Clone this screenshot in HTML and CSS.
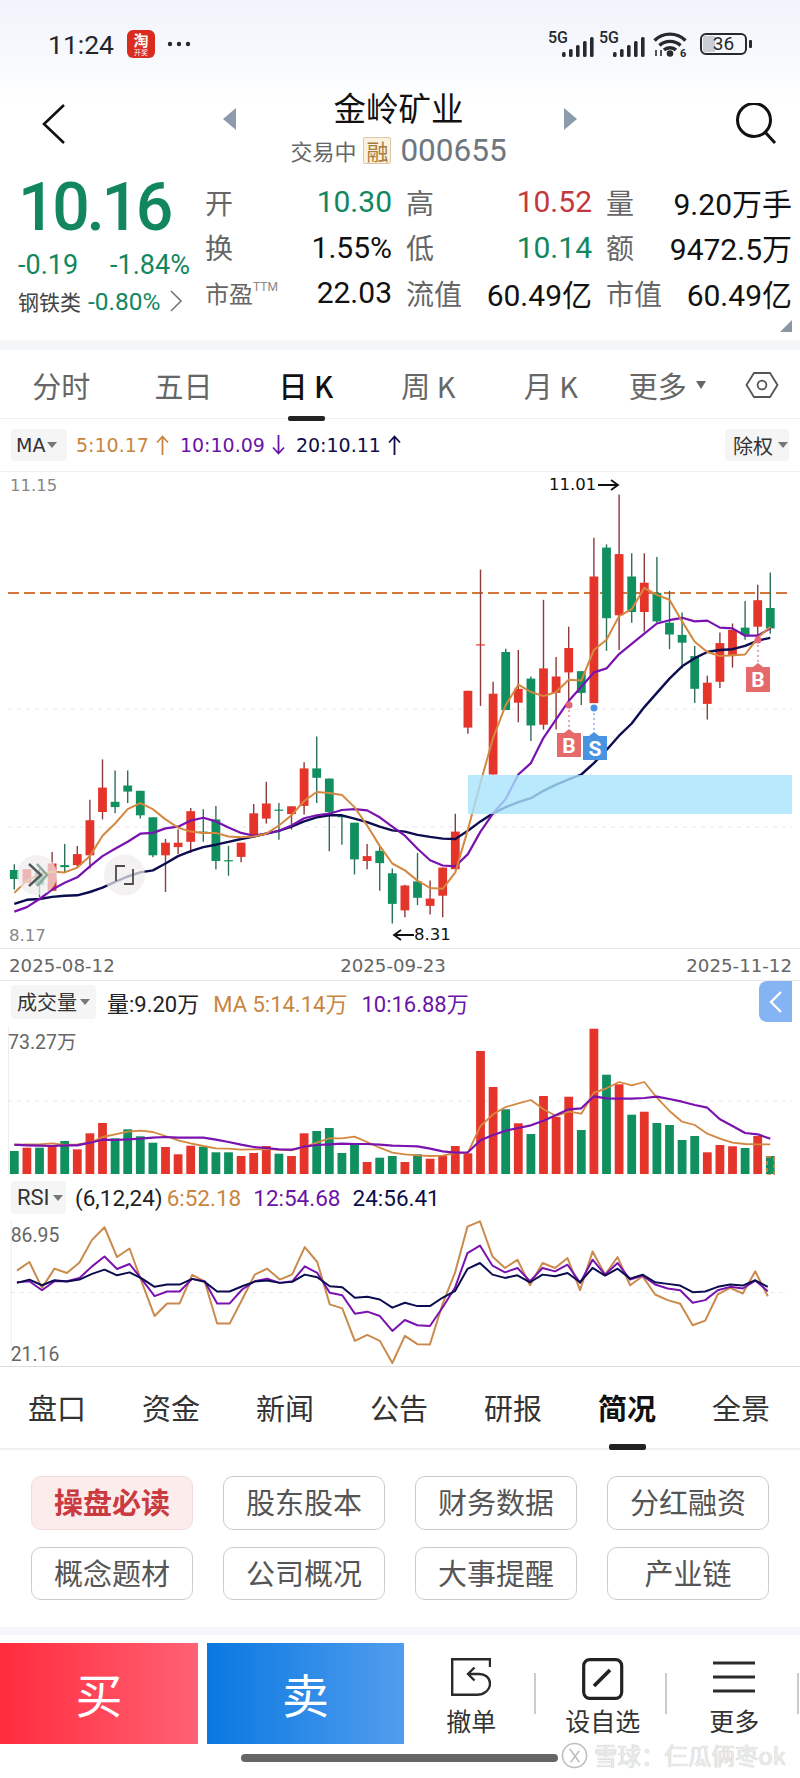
FILE: index.html
```html
<!DOCTYPE html>
<html lang="zh-CN">
<head>
    <meta charset="UTF-8">
    <meta name="viewport" content="width=device-width, initial-scale=1.0">
    <title>金岭矿业 000655</title>
    <link rel="stylesheet" href="styles.css">
</head>
<body>
    <div class="page">
        <div class="status">
            <span class="clock">11:24</span>
            <div class="app-icon"><span class="app-top">淘</span><span class="app-bottom">开奖</span></div>
            <svg class="dots" width="24" height="6" viewBox="0 0 24 6"><circle cx="3" cy="3" r="2.2"/><circle cx="12" cy="3" r="2.2"/><circle cx="21" cy="3" r="2.2"/></svg>
            <div class="status-right">
                <div class="signal">
                    <span class="signal-tag">5G</span>
                    <svg width="32" height="22" viewBox="0 0 32 22"><rect x="0" y="16" width="3.6" height="5" rx="1.5"/><rect x="7" y="13" width="3.6" height="8" rx="1.5"/><rect x="14" y="9" width="3.6" height="12" rx="1.5"/><rect x="21" y="5" width="3.6" height="16" rx="1.5"/><rect x="28" y="1" width="3.6" height="20" rx="1.5"/></svg>
                </div>
                <div class="signal">
                    <span class="signal-tag">5G</span>
                    <svg width="32" height="22" viewBox="0 0 32 22"><rect x="0" y="16" width="3.6" height="5" rx="1.5"/><rect x="7" y="13" width="3.6" height="8" rx="1.5"/><rect x="14" y="9" width="3.6" height="12" rx="1.5"/><rect x="21" y="5" width="3.6" height="16" rx="1.5"/><rect x="28" y="1" width="3.6" height="20" rx="1.5"/></svg>
                </div>
                <svg class="wifi" width="34" height="27" viewBox="0 0 34 27" fill="none" stroke="#26292d" stroke-width="3.4">
                    <path d="M1.5 9.5C10 1 24 1 32.5 9.5"/>
                    <path d="M6.5 14.5C12 9 22 9 27.5 14.5"/>
                    <path d="M11 19C14 16 20 16 23 19"/>
                    <circle cx="17" cy="22.5" r="1.6" fill="#26292d"/>
                    <path d="M3 19v6M8 19v6" stroke-width="1.6"/>
                    <text x="27" y="26" class="wifi-num">6</text>
                </svg>
                <div class="battery"><span class="battery-fill"></span><span class="battery-num">36</span></div>
                <span class="battery-tip"></span>
            </div>
        </div>

        <div class="title">
            <svg class="back" width="24" height="40" viewBox="0 0 24 40" fill="none" stroke="#111" stroke-width="2.6"><path d="M22 1L2 20L22 39"/></svg>
            <span class="arrow-left"></span>
            <div class="title-mid">
                <div class="title-name">金岭矿业</div>
                <div class="title-sub"><span>交易中</span><span class="rong">融</span><span class="code">000655</span></div>
            </div>
            <span class="arrow-right"></span>
            <svg class="search" width="44" height="42" viewBox="0 0 44 42" fill="none" stroke="#111" stroke-width="3"><circle cx="20" cy="17" r="16.5"/><path d="M31 29L41 40"/></svg>
        </div>

        <div class="quote">
            <div class="price-box">
                <div class="price">10.16</div>
                <div class="change"><span>-0.19</span><span>-1.84%</span></div>
                <div class="sector"><span class="sector-name">钢铁类</span><span class="sector-value">-0.80%</span>
                    <svg width="13" height="22" viewBox="0 0 13 22" fill="none" stroke="#777" stroke-width="1.6"><path d="M1 1L11 11L1 21"/></svg>
                </div>
            </div>
            <div class="quote-grid">
                <div class="cell"><span class="cell-label">开</span><span class="cell-value green">10.30</span></div>
                <div class="cell"><span class="cell-label">高</span><span class="cell-value red">10.52</span></div>
                <div class="cell"><span class="cell-label">量</span><span class="cell-value">9.20万手</span></div>
                <div class="cell"><span class="cell-label">换</span><span class="cell-value">1.55%</span></div>
                <div class="cell"><span class="cell-label">低</span><span class="cell-value green">10.14</span></div>
                <div class="cell"><span class="cell-label">额</span><span class="cell-value">9472.5万</span></div>
                <div class="cell"><span class="cell-label small">市盈<sup>TTM</sup></span><span class="cell-value">22.03</span></div>
                <div class="cell"><span class="cell-label">流值</span><span class="cell-value">60.49亿</span></div>
                <div class="cell"><span class="cell-label">市值</span><span class="cell-value">60.49亿</span></div>
            </div>
            <span class="corner"></span>
        </div>

        <div class="period-tabs">
            <span class="period">分时</span>
            <span class="period">五日</span>
            <span class="period active">日 K</span>
            <span class="period">周 K</span>
            <span class="period">月 K</span>
            <span class="period more">更多<i class="caret big"></i></span>
            <svg class="hex" width="34" height="28" viewBox="0 0 34 28" fill="none" stroke="#555" stroke-width="1.8"><path d="M9 2H25L32.5 14L25 26H9L1.5 14Z"/><circle cx="17" cy="14" r="4.4"/></svg>
        </div>

        <div class="ma-row">
            <span class="pill pill-ma">MA<i class="caret"></i></span>
            <span class="ma-text orange">5:10.17<svg class="ma-arrow" width="13" height="20" viewBox="0 0 13 20"><path d="M6.5 20V2M1 7.5L6.5 1.5L12 7.5"/></svg></span>
            <span class="ma-text purple">10:10.09<svg class="ma-arrow" width="13" height="20" viewBox="0 0 13 20"><path d="M6.5 0V18M1 12.5L6.5 18.5L12 12.5"/></svg></span>
            <span class="ma-text navy">20:10.11<svg class="ma-arrow" width="13" height="20" viewBox="0 0 13 20"><path d="M6.5 20V2M1 7.5L6.5 1.5L12 7.5"/></svg></span>
            <span class="pill pill-right">除权<i class="caret"></i></span>
        </div>

        <svg class="chart-main" id="chart-main" width="800" height="476" viewBox="0 0 800 476">
            <text class="axis-text" x="10" y="19">11.15</text>
            <text class="axis-text" x="9" y="469">8.17</text>
            <text class="note-text" x="549" y="18">11.01</text>
            <path d="M598 13H617M611 8L618 13L611 18" class="note-arrow"/>
            <path d="M414 463H394M401 458L394 463L401 468" class="note-arrow"/>
            <text class="note-text" x="414" y="468">8.31</text>
            <path d="M8 237H792M8 355H792" class="grid-line"/>
            <path d="M8 121H792" class="cost-line"/>
            <g id="main-candles"></g>
            <g id="main-lines"></g>
            <rect class="zone" x="468" y="303" width="324" height="39"/>
            <g class="mark">
                <path class="mark-stem red-mark" d="M569 233V258"/><circle cx="569" cy="233" r="3.5" fill="#e4637a"/>
                <path d="M557 261H564L569 257L574 261H581V285H557Z" fill="#e46a6c"/>
                <text class="mark-text" x="569" y="281">B</text>
                <path class="mark-stem blue-mark" d="M594 236V260"/><circle cx="594" cy="236" r="3.5" fill="#4a93e3"/>
                <path d="M583 264H589L594 260L599 264H607V288H583Z" fill="#4a93e3"/>
                <text class="mark-text" x="595" y="284">S</text>
                <path class="mark-stem red-mark" d="M758 168V190"/><circle cx="758" cy="168" r="3.5" fill="#e4637a"/>
                <path d="M746 195H753L758 191L763 195H770V220H746Z" fill="#e46a6c"/>
                <text class="mark-text" x="758" y="215">B</text>
            </g>
            <g class="float-btn">
                <circle cx="37" cy="403" r="20"/>
                <circle cx="124.5" cy="403" r="20.5"/>
                <path class="float-arrow dark" d="M29 392L41 403L29 414"/>
                <path class="float-arrow teal" d="M37 392L47 403L37 414"/>
                <path class="float-bracket" d="M116 409V394H125M133 397V412H124"/>
            </g>
        </svg>

        <div class="date-row"><span>2025-08-12</span><span class="date-mid">2025-09-23</span><span>2025-11-12</span></div>

        <div class="sub-head vol-head">
            <span class="pill pill-wide">成交量<i class="caret"></i></span>
            <span class="sub-text">量:9.20万</span>
            <span class="sub-text orange">MA 5:14.14万</span>
            <span class="sub-text purple">10:16.88万</span>
            <span class="side-btn"><svg width="14" height="24" viewBox="0 0 14 24" fill="none" stroke="#fff" stroke-width="2.4"><path d="M12 2L2 12L12 22"/></svg></span>
        </div>
        <svg class="chart-vol" id="chart-vol" width="800" height="149" viewBox="0 0 800 149">
            <path class="axis-line" d="M8.5 0V149"/>
            <path d="M8 75H792" class="grid-line"/>
            <text class="sub-axis" x="8" y="23">73.27万</text>
            <g id="vol-bars"></g>
            <g id="vol-lines"></g>
            <rect class="vol-now" x="767" y="131" width="7" height="18"/>
        </svg>

        <div class="sub-head rsi-head">
            <span class="pill pill-rsi">RSI<i class="caret"></i></span>
            <span class="sub-text rsi-args">(6,12,24)</span>
            <span class="sub-text orange">6:52.18</span>
            <span class="sub-text purple">12:54.68</span>
            <span class="sub-text navy">24:56.41</span>
        </div>
        <svg class="chart-rsi" id="chart-rsi" width="800" height="147" viewBox="0 0 800 147">
            <path class="axis-line" d="M8.5 0V147"/>
            <path d="M8 73H792" class="grid-line"/>
            <text class="sub-axis" x="8" y="22">86.95</text>
            <text class="sub-axis" x="8" y="142">21.16</text>
            <g id="rsi-lines"></g>
        </svg>

        <div class="info-tabs">
            <span>盘口</span>
            <span>资金</span>
            <span>新闻</span>
            <span>公告</span>
            <span>研报</span>
            <span class="active">简况</span>
            <span>全景</span>
        </div>

        <div class="info-grid">
            <span class="info-btn active">操盘必读</span>
            <span class="info-btn">股东股本</span>
            <span class="info-btn">财务数据</span>
            <span class="info-btn">分红融资</span>
            <span class="info-btn">概念题材</span>
            <span class="info-btn">公司概况</span>
            <span class="info-btn">大事提醒</span>
            <span class="info-btn">产业链</span>
        </div>

        <div class="divider"></div>

        <div class="footer">
            <span class="trade buy">买</span>
            <span class="trade sell">卖</span>
            <div class="tool">
                <svg width="40" height="38" viewBox="0 0 40 38" fill="none" stroke="#2b2b2b" stroke-width="2.4"><path d="M39 9V1.2H1.2V36.8H26C33 36.8 39 32 39 25.5C39 19.5 34 16 28 16H17"/><path d="M23.5 9.5L17 16L23.5 22.5"/></svg>
                <span>撤单</span>
            </div>
            <div class="tool">
                <svg width="42" height="42" viewBox="0 0 42 42" fill="none" stroke="#222"><rect x="1.7" y="1.7" width="38" height="38.6" rx="6" stroke-width="3.2"/><path d="M12 28L28 12" stroke-width="3.8"/></svg>
                <span>设自选</span>
            </div>
            <div class="tool">
                <svg width="42" height="38" viewBox="0 0 42 38" fill="none" stroke="#2b2b2b" stroke-width="2.8"><path d="M0 5H42M0 19H42M0 33H42"/></svg>
                <span>更多</span>
            </div>
        </div>

        <div class="home-bar"></div>
        <div class="watermark">
            <svg width="27" height="27" viewBox="0 0 28 28" fill="none" stroke="#bdbdbd" stroke-width="1.6"><circle cx="14" cy="14" r="12.5"/><path d="M9 7L19 21M19 9L10 21"/></svg>
            <span>雪球：仨瓜俩枣ok</span>
        </div>
    </div>
    <script src="chart.js"></script>
</body>
</html>
```

FILE: styles.css
```css
* {
    box-sizing: border-box;
}
body {
    margin: 0;
    background: #fff;
    font-family: "Noto Sans CJK SC", sans-serif;
    color: #111;
}
.page {
    position: relative;
    width: 800px;
    height: 1778px;
    overflow: hidden;
    background: linear-gradient(#f1f4fb 0, #f8fafd 70px, #fff 100px);
}
.green { color: #12875f; }
.red { color: #c2383e; }
.orange { color: #c9853f; }
.purple { color: #6a14a8; }
.navy { color: #0d0d4a; }

/* status bar */
.status {
    display: flex;
    align-items: center;
    height: 88px;
    padding-left: 48px;
}
.clock {
    font: 400 26.5px Roboto, sans-serif;
    color: #23262a;
    width: 79px;
}
.app-icon {
    display: flex;
    flex-direction: column;
    align-items: center;
    width: 28px;
    height: 28px;
    padding-top: 1px;
    border-radius: 6px;
    background: #d92c1f;
    color: #fff;
}
.app-top {
    font-size: 15px;
    line-height: 17px;
    font-weight: 700;
}
.app-bottom {
    font-size: 7px;
    line-height: 9px;
}
.dots {
    margin-left: 12px;
    fill: #26292d;
}
.status-right {
    display: flex;
    align-items: center;
    margin-left: auto;
    padding-right: 48px;
}
.signal {
    position: relative;
    width: 51px;
    height: 28px;
}
.signal svg {
    position: absolute;
    left: 14px;
    bottom: 0;
    fill: #26292d;
}
.signal-tag {
    position: absolute;
    left: 0;
    top: 0;
    font: 500 16px/16px Roboto, sans-serif;
    color: #26292d;
}
.wifi {
    margin-left: 3px;
}
.wifi-num {
    font: 700 11px Roboto, sans-serif;
    fill: #26292d;
    stroke: none;
}
.battery {
    position: relative;
    width: 47px;
    height: 22px;
    margin-left: 13px;
    border: 2.4px solid #26292d;
    border-radius: 6px;
}
.battery-fill {
    position: absolute;
    left: 1px;
    top: 1px;
    bottom: 1px;
    width: 12px;
    background: #c9ced6;
}
.battery-num {
    position: relative;
    display: block;
    text-align: center;
    font: 400 19px/17px Roboto, sans-serif;
    color: #26292d;
}
.battery-tip {
    width: 3px;
    height: 8px;
    margin-left: 2px;
    border-radius: 1px;
    background: #26292d;
}

/* title */
.title {
    position: relative;
    display: flex;
    justify-content: center;
    height: 84px;
}
.back {
    position: absolute;
    left: 42px;
    top: 16px;
}
.search {
    position: absolute;
    left: 734px;
    top: 15px;
}
.arrow-left, .arrow-right {
    position: absolute;
    top: 20px;
    width: 0;
    height: 0;
    border-top: 11px solid transparent;
    border-bottom: 11px solid transparent;
}
.arrow-left {
    left: 223px;
    border-right: 13px solid #8d9cab;
}
.arrow-right {
    left: 564px;
    border-left: 13px solid #8d9cab;
}
.title-mid {
    display: flex;
    flex-direction: column;
    align-items: center;
    margin-left: -3px;
}
.title-name {
    font-size: 32.5px;
    line-height: 44px;
    margin-top: -3px;
    color: #111;
}
.title-sub {
    display: flex;
    align-items: center;
    height: 38px;
    margin-top: 2px;
    color: #666;
    font-size: 22px;
}
.rong {
    width: 28px;
    height: 27px;
    margin: 0 9px 0 7px;
    border: 1px solid #dcc9a8;
    border-radius: 2px;
    background: #fbf2df;
    color: #a87a3d;
    font-size: 22px;
    line-height: 25px;
    text-align: center;
}
.code {
    font: 400 31.5px Roboto, sans-serif;
    color: #6e7680;
}

/* quote block */
.quote {
    position: relative;
    display: flex;
    height: 168px;
}
.price-box {
    width: 205px;
    padding-left: 18px;
    flex: none;
}
.price {
    font: 500 66px/72px Roboto, sans-serif;
    letter-spacing: -3.3px;
    margin-left: 0;
    color: #12875f;
}
.change {
    display: flex;
    justify-content: space-between;
    width: 172px;
    margin-top: 4px;
    font: 400 27px/34px Roboto, sans-serif;
    color: #12875f;
}
.sector {
    display: flex;
    align-items: center;
    margin-top: 2px;
    height: 34px;
}
.sector-name {
    font-size: 21px;
    color: #444;
}
.sector-value {
    margin-left: 7px;
    font: 400 24.5px Roboto, sans-serif;
    color: #12875f;
}
.sector svg {
    margin-left: 10px;
}
.quote-grid {
    display: grid;
    grid-template-columns: 187px 186px 186px;
    column-gap: 14px;
    grid-auto-rows: 45.5px;
    padding-top: 7px;
}
.cell {
    display: flex;
    align-items: center;
    justify-content: space-between;
}
.cell-label {
    font-size: 28px;
    color: #666;
}
.cell-label.small {
    font-size: 24px;
}
.cell-label sup {
    font: 400 12px Roboto, sans-serif;
    vertical-align: 12px;
    color: #888;
}
.cell-value {
    font: 400 30px Roboto, "Noto Sans CJK SC", sans-serif;
    color: #111;
}
.cell-value.green { color: #12875f; }
.cell-value.red { color: #c2383e; }
.corner {
    position: absolute;
    right: 8px;
    top: 148px;
    width: 0;
    height: 0;
    border-left: 12px solid transparent;
    border-bottom: 12px solid #8d96a3;
}

/* period tabs */
.period-tabs {
    display: flex;
    align-items: center;
    height: 79px;
    padding-top: 1px;
    border-top: 10px solid #f5f6f8;
    border-bottom: 1px solid #eee;
    font-size: 29px;
    color: #666;
}
.period {
    position: relative;
    width: 122.4px;
    text-align: center;
}
.period.active {
    color: #111;
    font-weight: 500;
}
.period.active::after {
    content: '';
    position: absolute;
    left: 43px;
    bottom: -15px;
    width: 37px;
    height: 5px;
    border-radius: 2px;
    background: #222;
}
.more {
    display: flex;
    align-items: center;
    justify-content: center;
    margin-left: -6px;
}
.hex {
    margin-left: 17px;
}
.caret {
    display: inline-block;
    width: 0;
    height: 0;
    margin-left: 5px;
    border-left: 5px solid transparent;
    border-right: 5px solid transparent;
    border-top: 6px solid #777;
}
.caret.big {
    margin-left: 9px;
    border-width: 8px 5px 0;
    border-top-color: #666;
}

/* MA legend */
.ma-row {
    display: flex;
    align-items: center;
    height: 53px;
    padding: 0 11px;
    border-bottom: 1px solid #f0f0f0;
    font-family: "DejaVu Sans", "Noto Sans CJK SC", sans-serif;
    font-size: 19px;
}
.pill {
    display: flex;
    align-items: center;
    flex: none;
    height: 32px;
    padding: 0 5px;
    border-radius: 4px;
    background: #f6f5f5;
    color: #333;
    white-space: nowrap;
}
.pill-ma {
    width: 56px;
    padding: 0 0 0 5px;
}
.pill-ma .caret {
    margin-left: 2px;
}
.ma-text {
    display: flex;
    align-items: center;
    gap: 7px;
    margin-left: 9px;
    margin-right: 2px;
    white-space: nowrap;
}
.ma-arrow {
    fill: none;
    stroke: currentColor;
    stroke-width: 1.8;
}
.pill-right {
    width: 64px;
    margin-left: auto;
    padding-left: 8px;
    font-family: "Noto Sans CJK SC", sans-serif;
    font-size: 20px;
}

/* charts */
svg {
    display: block;
}
.axis-text, .note-text {
    font: 400 16.5px "DejaVu Sans", sans-serif;
}
.axis-text {
    fill: #888;
}
.note-text {
    fill: #111;
}
.note-arrow {
    fill: none;
    stroke: #111;
    stroke-width: 1.8;
}
.grid-line {
    fill: none;
    stroke: #e8e8e8;
    stroke-dasharray: 4 5;
}
.cost-line {
    fill: none;
    stroke: #d2763c;
    stroke-width: 2;
    stroke-dasharray: 11 5;
}
.axis-line {
    stroke: #eee;
    fill: none;
}
.zone {
    fill: #a8e4fc;
    fill-opacity: 0.8;
}
.mark-stem {
    fill: none;
    stroke-width: 1.5;
    stroke-dasharray: 2 3;
}
.red-mark { stroke: #e98a90; }
.blue-mark { stroke: #86b4ea; }
.mark-text {
    font: 700 21px Roboto, sans-serif;
    fill: #fff;
    text-anchor: middle;
}
.float-btn circle {
    fill: #eeecec;
    fill-opacity: 0.72;
}
.float-arrow {
    fill: none;
    stroke-width: 2.4;
}
.float-arrow.dark { stroke: #58585c; }
.float-arrow.teal { stroke: #8aa898; }
.float-bracket {
    fill: none;
    stroke: #4c4c4c;
    stroke-width: 1.8;
}
.date-row {
    display: flex;
    justify-content: space-between;
    height: 33px;
    padding: 0 8px 0 9px;
    border-top: 1px solid #e9e9e9;
    border-bottom: 1px solid #e9e9e9;
    font: 400 18.2px/33px "DejaVu Sans", sans-serif;
    color: #666;
}
.date-mid {
    margin-right: 15px;
}
.sub-head {
    display: flex;
    align-items: center;
    padding-left: 11px;
    font: 400 22.5px Roboto, "Noto Sans CJK SC", sans-serif;
}
.vol-head {
    height: 45px;
    padding-bottom: 4px;
    font-size: 22px;
}
.rsi-head {
    height: 45px;
}
.pill-wide {
    width: 85px;
    height: 34px;
    margin-right: 11px;
    padding-left: 6px;
    font-size: 20px;
    font-family: "Noto Sans CJK SC", sans-serif;
}
.pill-rsi {
    width: 55px;
    height: 33px;
    margin-right: 9px;
    padding-left: 6px;
    font-size: 22px;
}
.pill-rsi .caret, .pill-wide .caret {
    margin-left: 3px;
}
.sub-text {
    margin-right: 14px;
    color: #222;
    white-space: nowrap;
}
.sub-text.orange { color: #c9853f; }
.sub-text.purple { color: #6a14a8; }
.sub-text.navy { color: #0d0d4a; }
.rsi-head .sub-text {
    margin-right: 12px;
}
.rsi-head .rsi-args {
    margin-right: 4px;
}
.side-btn {
    display: flex;
    align-items: center;
    justify-content: center;
    width: 33px;
    height: 41px;
    margin-left: auto;
    margin-right: 8px;
    border-radius: 8px 0 0 8px;
    background: #85b4f5;
}
.sub-axis {
    font: 400 19.5px Roboto, "Noto Sans CJK SC", sans-serif;
    fill: #666;
}
.vol-now {
    fill: none;
    stroke: #e0823c;
    stroke-width: 1.6;
    stroke-dasharray: 4 3;
}
.chart-rsi {
    border-bottom: 1px solid #ddd;
}

/* info tabs and buttons */
.info-tabs {
    display: grid;
    grid-template-columns: repeat(7, 1fr);
    height: 83px;
    padding: 2px 2px 0 0;
    border-bottom: 2px solid #f0f1f3;
    font-size: 29px;
    line-height: 76px;
    color: #333;
    text-align: center;
}
.info-tabs .active {
    position: relative;
    color: #111;
    font-weight: 700;
}
.info-tabs .active::after {
    content: '';
    position: absolute;
    left: 39px;
    bottom: -2px;
    width: 37px;
    height: 6px;
    border-radius: 2px;
    background: #222;
}
.info-grid {
    display: grid;
    grid-template-columns: repeat(4, 162px);
    grid-auto-rows: 53.5px;
    column-gap: 30px;
    row-gap: 17px;
    padding: 26px 0 0 31px;
    height: 177px;
}
.info-btn {
    border: 1.4px solid #ccc;
    border-radius: 10px;
    font-size: 29px;
    line-height: 49px;
    color: #555;
    text-align: center;
}
.info-btn.active {
    border-color: #f3dcdd;
    background: #fdecec;
    color: #cb3a3f;
    font-weight: 700;
}
.divider {
    height: 8px;
    background: #f5f6f9;
}

/* bottom bar */
.footer {
    display: flex;
    height: 101px;
    margin-top: 8px;
}
.trade {
    width: 197px;
    height: 101px;
    text-align: center;
    font-size: 47px;
    line-height: 100px;
    color: #fff;
}
.buy {
    width: 198px;
    background: linear-gradient(90deg, #ff2c3d, #ff6174);
}
.sell {
    margin-left: 9px;
    background: linear-gradient(90deg, #0a78e0, #519dee);
}
.tool {
    position: relative;
    display: flex;
    flex-direction: column;
    align-items: center;
    justify-content: space-between;
    width: 131.5px;
    height: 92px;
    padding: 15px 0 0 3px;
    font-size: 25px;
    line-height: 30px;
    color: #333;
}
.tool::after {
    content: '';
    position: absolute;
    right: 0;
    top: 30px;
    width: 2px;
    height: 41px;
    background: #ccc;
}
.home-bar {
    position: absolute;
    left: 241px;
    top: 1754px;
    width: 317px;
    height: 8px;
    border-radius: 4px;
    background: #666;
}
.watermark {
    position: absolute;
    left: 561px;
    top: 1741px;
    display: flex;
    align-items: center;
    gap: 6px;
    font-size: 23.5px;
    line-height: 28px;
    color: #ececec;
    text-shadow: 0 0 1px #aaa;
}
```

FILE: chart.js
```js
// candles: [color, wickTop, bodyTop, bodyBottom, wickBottom], read off the picture at 2.45 units per px
const candles = [
    ['g', 1260, 1274, 1296, 1322], ['r', 1272, 1272, 1305, 1305], ['g', 1270, 1280, 1310, 1340], ['r', 1230, 1258, 1325, 1325],
    ['g', 1210, 1262, 1267, 1280], ['r', 1215, 1235, 1262, 1265], ['r', 1102, 1152, 1238, 1270], ['r', 1003, 1072, 1132, 1150],
    ['g', 1030, 1107, 1120, 1135], ['g', 1030, 1067, 1082, 1110], ['g', 1080, 1080, 1140, 1148], ['g', 1145, 1145, 1238, 1243],
    ['r', 1198, 1207, 1238, 1328], ['r', 1175, 1207, 1218, 1235], ['r', 1122, 1130, 1205, 1232], ['g', 1125, 1180, 1184, 1205],
    ['g', 1117, 1150, 1252, 1273], ['g', 1215, 1250, 1253, 1288], ['r', 1207, 1207, 1242, 1255], ['r', 1112, 1135, 1188, 1190],
    ['r', 1058, 1111, 1148, 1160], ['g', 1110, 1126, 1129, 1200], ['r', 1118, 1118, 1137, 1175], ['r', 1010, 1025, 1117, 1138],
    ['g', 947, 1025, 1048, 1110], ['g', 1050, 1050, 1132, 1228], ['g', 1140, 1142, 1145, 1212], ['g', 1158, 1158, 1248, 1285],
    ['r', 1210, 1240, 1252, 1272], ['g', 1215, 1227, 1257, 1325], ['g', 1270, 1282, 1357, 1405], ['r', 1310, 1312, 1373, 1390],
    ['g', 1232, 1302, 1342, 1360], ['r', 1300, 1344, 1362, 1383], ['r', 1268, 1268, 1337, 1390], ['r', 1136, 1180, 1272, 1272],
    ['r', 835, 835, 925, 940], ['r', 538, 721, 724, 872], ['r', 813, 842, 1040, 1040], ['g', 732, 740, 882, 882],
    ['r', 735, 830, 864, 912], ['g', 800, 805, 920, 958], ['r', 612, 780, 918, 930], ['r', 752, 800, 840, 930],
    ['r', 678, 730, 790, 860], ['g', 787, 787, 840, 870], ['r', 460, 555, 865, 865], ['g', 476, 484, 657, 737],
    ['r', 354, 500, 650, 735], ['g', 498, 555, 642, 668], ['r', 498, 570, 642, 690], ['g', 507, 595, 665, 668],
    ['g', 590, 668, 697, 733], ['g', 643, 698, 717, 780], ['g', 725, 750, 830, 865], ['r', 798, 815, 867, 905],
    ['r', 692, 718, 813, 828], ['r', 670, 686, 750, 778], ['g', 615, 680, 698, 710], ['r', 575, 613, 678, 700],
    ['g', 545, 632, 682, 695]
];
const ma5 = [1330, 1300, 1285, 1278, 1280, 1268, 1240, 1190, 1160, 1125, 1110, 1125, 1150, 1170, 1180, 1183, 1183, 1192, 1194, 1192, 1185, 1165, 1140, 1105, 1083, 1085, 1090, 1120, 1165, 1215, 1258, 1275, 1300, 1318, 1320, 1280, 1175, 1060, 950, 870, 820, 838, 848, 838, 808, 810, 735, 710, 652, 635, 583, 600, 612, 665, 715, 740, 750, 748, 746, 705, 678];
const ma10 = [1376, 1365, 1345, 1322, 1305, 1292, 1265, 1240, 1222, 1205, 1185, 1183, 1172, 1168, 1153, 1146, 1155, 1170, 1183, 1190, 1185, 1178, 1165, 1147, 1140, 1136, 1127, 1125, 1128, 1145, 1168, 1190, 1222, 1250, 1263, 1265, 1235, 1180, 1135, 1100, 1040, 1012, 950, 905, 860, 825, 790, 780, 745, 720, 695, 670, 662, 656, 665, 663, 680, 682, 700, 700, 682];
const ma20 = [1357, 1347, 1345, 1340, 1337, 1336, 1328, 1317, 1303, 1290, 1280, 1275, 1258, 1240, 1228, 1218, 1212, 1205, 1198, 1192, 1185, 1178, 1168, 1155, 1145, 1140, 1140, 1148, 1157, 1168, 1177, 1180, 1188, 1193, 1197, 1198, 1178, 1155, 1135, 1120, 1108, 1098, 1080, 1065, 1052, 1040, 1012, 980, 945, 915, 875, 840, 805, 775, 755, 740, 735, 733, 725, 712, 705];

// volume and rsi are read at 3 units per px
const volume = [510, 500, 500, 495, 480, 505, 457, 426, 472, 445, 466, 485, 498, 520, 494, 497, 514, 514, 525, 516, 495, 518, 525, 457, 450, 441, 516, 490, 543, 530, 525, 543, 520, 533, 525, 495, 517, 210, 318, 385, 427, 459, 345, 408, 347, 447, 143, 281, 310, 401, 392, 426, 432, 477, 465, 514, 492, 496, 501, 465, 525];
const volMa5 = [492, 490, 490, 487, 492, 490, 485, 468, 460, 452, 449, 453, 465, 478, 487, 495, 502, 503, 506, 505, 504, 506, 508, 498, 485, 472, 472, 467, 483, 500, 515, 520, 523, 525, 524, 516, 515, 435, 400, 378, 367, 357, 385, 405, 392, 398, 335, 322, 303, 313, 303, 350, 390, 422, 432, 458, 473, 485, 489, 490, 490];
const volMa10 = [491, 493, 494, 495, 493, 493, 485, 476, 477, 475, 473, 470, 468, 470, 470, 470, 476, 483, 491, 498, 501, 505, 506, 497, 492, 490, 488, 489, 489, 491, 494, 495, 496, 503, 511, 515, 514, 478, 462, 449, 441, 433, 419, 402, 385, 382, 346, 352, 353, 353, 351, 347, 354, 362, 372, 380, 415, 435, 456, 460, 473];
const rsi6 = [873, 847, 925, 867, 880, 848, 780, 742, 832, 806, 910, 1010, 972, 972, 886, 905, 1033, 1033, 960, 885, 867, 900, 884, 802, 847, 975, 987, 1085, 1067, 1085, 1152, 1070, 1095, 1096, 975, 880, 740, 724, 830, 865, 840, 917, 850, 865, 835, 932, 815, 885, 832, 917, 890, 945, 962, 973, 1038, 1024, 945, 925, 942, 875, 950];
const rsi12 = [908, 905, 932, 905, 905, 895, 860, 830, 868, 853, 900, 950, 936, 936, 898, 905, 972, 972, 930, 905, 897, 910, 905, 860, 880, 940, 947, 1003, 997, 1010, 1055, 1022, 1038, 1040, 985, 925, 820, 797, 858, 878, 865, 905, 865, 875, 855, 910, 840, 885, 850, 900, 888, 915, 927, 932, 970, 962, 932, 922, 927, 903, 935];
const rsi24 = [910, 900, 917, 902, 906, 900, 883, 870, 887, 878, 897, 922, 915, 915, 898, 907, 936, 936, 920, 906, 903, 910, 907, 885, 893, 920, 923, 955, 952, 960, 985, 970, 980, 980, 955, 935, 868, 850, 885, 895, 887, 908, 885, 890, 880, 908, 865, 888, 867, 897, 885, 908, 913, 918, 938, 936, 922, 915, 918, 902, 922];

const colors = { r: '#e5352b', g: '#11905f', rWick: '#8c3a3a', gWick: '#2f6f5c', orange: '#d4873f', purple: '#7a12b0', navy: '#0c0c50' };
const xAt = i => 14.3 + 12.6 * i;
const mainY = z => (350 + z / 2.45 - 472).toFixed(1);
const volY = z => (980 + z / 3 - 1025).toFixed(1);
const rsiY = z => (980 + z / 3 - 1220).toFixed(1);

function polyline(values, toY, color, width) {
    const points = values.map((z, i) => xAt(i).toFixed(1) + ',' + toY(z)).join(' ');
    return `<polyline points="${points}" fill="none" stroke="${color}" stroke-width="${width}" stroke-linejoin="round"/>`;
}

let candleHtml = '';
let barHtml = '';
candles.forEach((c, i) => {
    const x = xAt(i);
    const top = mainY(c[2]);
    const wick = colors[c[0] + 'Wick'];
    candleHtml += `<line x1="${x}" x2="${x}" y1="${mainY(c[1])}" y2="${mainY(c[4])}" stroke="${wick}" stroke-width="1.4"/>`;
    candleHtml += `<rect x="${x - 4.4}" y="${top}" width="8.8" height="${Math.max(mainY(c[3]) - top, 1.2).toFixed(1)}" fill="${colors[c[0]]}"/>`;
    const barTop = volY(volume[i]);
    barHtml += `<rect x="${x - 4.4}" y="${barTop}" width="8.8" height="${(148 - barTop).toFixed(1)}" fill="${colors[c[0]]}"/>`;
});

document.getElementById('main-candles').innerHTML = candleHtml;
document.getElementById('main-lines').innerHTML =
    polyline(ma20, mainY, colors.navy, 2.4) + polyline(ma10, mainY, colors.purple, 2.2) + polyline(ma5, mainY, colors.orange, 2);
document.getElementById('vol-bars').innerHTML = barHtml;
document.getElementById('vol-lines').innerHTML =
    polyline(volMa5, volY, colors.orange, 1.8) + polyline(volMa10, volY, colors.purple, 2.2);
document.getElementById('rsi-lines').innerHTML =
    polyline(rsi6, rsiY, '#c98a4c', 2) + polyline(rsi12, rsiY, colors.purple, 2) + polyline(rsi24, rsiY, colors.navy, 2);
```
